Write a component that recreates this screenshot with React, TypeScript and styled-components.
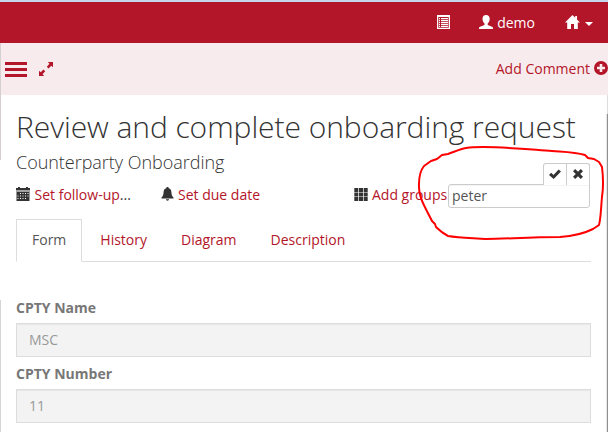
import React from "react";
import styled, { createGlobalStyle } from "styled-components";

const RED = "#b31529";
const INK = "#333333";
const LINE = "#dddddd";

const GlobalStyle = createGlobalStyle`
  * { box-sizing: border-box; }
  body {
    margin: 0;
    background: #fff;
    font-family: "Open Sans", "Noto Sans", sans-serif;
    font-size: 14px;
    line-height: 20px;
    color: ${INK};
    overflow: hidden;
  }
`;

const Page = styled.div`
  position: relative;
  width: 608px;
  height: 432px;
  overflow: hidden;
  display: flex;
  flex-direction: column;
`;

const Header = styled.header`
  flex: none;
  height: 43px;
  padding: 0 15px 0 0;
  border-top: 2px solid #c5d7ea;
  background: ${RED};
  color: #fff;
  display: flex;
  justify-content: flex-end;
  align-items: center;
`;

const HeaderItem = styled.span<{ $gap?: number; $before?: number }>`
  display: flex;
  align-items: center;
  gap: ${(p) => p.$gap ?? 4}px;
  margin-left: ${(p) => p.$before ?? 0}px;
  svg { margin-top: -1px; }
  svg + svg { margin-top: 2px; }
`;

const Toolbar = styled.div`
  flex: none;
  height: 52px;
  padding-left: 5px;
  background: #f8ebed;
  color: ${RED};
  display: flex;
  align-items: center;
`;

const Burger = styled.div`
  width: 22px;
  height: 15px;
  border-top: 3px solid ${RED};
  border-bottom: 3px solid ${RED};
  padding: 3px 0;
  &::before {
    content: "";
    display: block;
    height: 3px;
    background: ${RED};
  }
`;

const Expand = styled.span`
  display: flex;
  margin-left: 12px;
`;

const AddComment = styled.a`
  display: flex;
  align-items: center;
  gap: 4px;
  margin-left: auto;
  svg { margin-top: -2px; }
`;

const Content = styled.main`
  flex: 1;
  padding: 0 17px 0 16px;
`;

const Title = styled.h1`
  margin: 15px 0 0;
  font-size: 30px;
  font-weight: 300;
  line-height: 33px;
  letter-spacing: -0.06px;
  white-space: nowrap;
`;

const Subtitle = styled.h2`
  margin: 9px 0 0;
  font-size: 18px;
  font-weight: 300;
  line-height: 20px;
  letter-spacing: -0.03px;
`;

const Actions = styled.div`
  display: grid;
  grid-template-columns: 145px 193px 94px 142px;
  height: 34px;
  margin-top: 13px;
`;

const Action = styled.a<{ $gap?: number }>`
  display: flex;
  align-items: center;
  height: 20px;
  gap: ${(p) => p.$gap ?? 4}px;
  white-space: nowrap;
  svg { color: ${INK}; flex: none; margin-top: -2px; }
  span { color: ${RED}; }
`;

const Ellipsis = styled.b`
  font-weight: 400;
  color: ${INK};
`;

const Editor = styled.div`
  position: relative;
  height: 24px;
  margin-top: -1px;
`;

const GroupInput = styled.div`
  height: 24px;
  padding: 1px 3px;
  border: 1px solid #ccc;
  border-radius: 3px;
  border-top-right-radius: 0;
  background: #fff;
  box-shadow: inset 0 1px 1px rgba(0, 0, 0, 0.05);
  color: #555;
`;

const EditorButtons = styled.div`
  position: absolute;
  right: 0;
  bottom: 23px;
  display: flex;
  height: 22px;
  border: 1px solid #ccc;
  border-bottom: 0;
  border-radius: 3px 3px 0 0;
  background: #fff;
`;

const EditorButton = styled.button`
  width: 22px;
  padding: 0 0 1px;
  border: 0;
  background: none;
  color: ${INK};
  display: flex;
  align-items: center;
  justify-content: center;
  & + & { width: 23px; padding-bottom: 2px; border-left: 1px solid #ccc; }
`;

const Tabs = styled.nav`
  display: flex;
  height: 43px;
  border-bottom: 1px solid ${LINE};
`;

const Tab = styled.a<{ $active?: boolean }>`
  height: 43px;
  padding: 10px 15px;
  margin-right: 2px;
  border: 1px solid ${(p) => (p.$active ? LINE : "transparent")};
  border-bottom-color: ${(p) => (p.$active ? "#fff" : "transparent")};
  color: ${(p) => (p.$active ? "#555" : RED)};
`;

const Form = styled.form`
  padding-top: 36px;
`;

const Field = styled.div`
  height: 66px;
`;

const Label = styled.label`
  display: block;
  height: 20px;
  margin-bottom: 5px;
  font-weight: 700;
  color: #777;
`;

const Value = styled.div`
  height: 34px;
  padding: 6px 12px;
  border: 1px solid ${LINE};
  background: #f3f3f3;
  box-shadow: inset 0 1px 1px rgba(0, 0, 0, 0.05);
  color: #999;
`;

const Edge = styled.div<{ $x: number; $top: number; $height: number; $color: string }>`
  position: absolute;
  left: ${(p) => p.$x}px;
  top: ${(p) => p.$top}px;
  width: 1px;
  height: ${(p) => p.$height}px;
  background: ${(p) => p.$color};
`;

const Marker = styled.svg`
  position: absolute;
  left: 0;
  top: 0;
  pointer-events: none;
`;

const Icon = ({ w = 14, h = 14, children }: { w?: number; h?: number; children: React.ReactNode }) => (
  <svg width={w} height={h} viewBox={`0 0 ${w} ${h}`} fill="currentColor">
    {children}
  </svg>
);

const ListIcon = () => (
  <Icon w={13}>
    <path fillRule="evenodd" d="M0 0h13v14H0zM1.300 2v10.700h10.400V2z" />
    <path d="M2 3h1v1.300H2zM4 3h7v1.300H4zM2 5h1v1.300H2zM4 5h7v1.300H4zM2 7h1v1.300H2zM4 7h7v1.300H4zM2 9h1v1.300H2zM4 9h7v1.300H4zM2 11h1v1H2zM4 11h7v1H4z" />
  </Icon>
);

const UserIcon = () => (
  <Icon>
    <path d="M7 0C4.800 0 3.500 1.500 3.500 3.800c0 2 .7 3.700 2 4.700v1.500L1 11.800C.3 12.100 0 12.600 0 13.300V14h14v-.7c0-.7-.3-1.200-1-1.500L8.700 10V8.500c1.300-1 2-2.700 2-4.700C10.700 1.500 9.300 0 7 0z" />
  </Icon>
);

const HomeIcon = () => (
  <Icon w={15}>
    <path d="M7.500 0 0 7.500h2.200V14H6V9h3v5h3.800V7.500H15L12 4.500V1h-1.800v1.700z" />
  </Icon>
);

const CaretIcon = () => (
  <Icon w={8} h={4}>
    <path d="M0 0h8L4 4z" />
  </Icon>
);

const ExpandIcon = () => (
  <Icon w={14}>
    <path d="M8.800 0H14v5.300l-1.700-1.500-2.800 2.600-1.700-1.700 2.700-2.900zM0 14V8.700l1.700 1.500 2.800-2.600 1.700 1.700-2.700 2.900L5.200 14z" />
  </Icon>
);

const PlusIcon = () => (
  <Icon>
    <path fillRule="evenodd" d="M7 0a7 7 0 1 0 0 14A7 7 0 0 0 7 0zM5.700 3h2.600v2.700H11v2.600H8.300V11H5.700V8.300H3V5.700h2.700z" />
  </Icon>
);

const CalendarIcon = () => (
  <Icon>
    <path d="M2 0h2v1h6V0h2v1h2v2H0V1h2z" />
    <path opacity=".45" d="M0 3h14v2H0z" />
    <path fillRule="evenodd" d="M.5 5h13v9H.5zM4 6v1h1V6zm2.500 0v1h1V6zM9 6v1h1V6zm2.500 0v1h1V6zM1.500 8.500v1h1v-1zm2.500 0v1h1v-1zm2.500 0v1h1v-1zm2.500 0v1h1v-1zm2.500 0v1h1v-1zM1.500 11v1h1v-1zM4 11v1h1v-1zm2.500 0v1h1v-1zM9 11v1h1v-1z" />
  </Icon>
);

const BellIcon = () => (
  <Icon w={13} h={14}>
    <path d="M6.500 0c.8 0 1.200.5 1.200 1.300 1.800.5 2.600 1.900 2.700 3.700.1 2.800.6 4 2.100 5.500v1H.5v-1C2 9 2.500 7.800 2.600 5c.1-1.800.9-3.200 2.700-3.700C5.300.5 5.700 0 6.500 0zM5 12.300h3c0 1-.6 1.400-1.500 1.400S5 13.300 5 12.300z" />
  </Icon>
);

const GridIcon = () => (
  <Icon w={14} h={13}>
    <path d="M.3 0h4v4h-4zM5 0h4v4H5zM9.700 0h4v4h-4zM.3 4.500h4v4h-4zM5 4.500h4v4H5zM9.700 4.500h4v4h-4zM.3 9h4v4h-4zM5 9h4v4H5zM9.700 9h4v4h-4z" />
  </Icon>
);

const CheckIcon = () => (
  <Icon w={12} h={11}>
    <path d="M0 6l2.200-2.200 2.300 2.100L9.600.6 12 2.500 4.700 10z" />
  </Icon>
);

const CrossIcon = () => (
  <Icon w={10} h={10}>
    <path d="M2.200 0 5 2.800 7.800 0 10 2.200 7.200 5 10 7.800 7.800 10 5 7.200 2.200 10 0 7.800 2.800 5 0 2.200z" />
  </Icon>
);

export default function App() {
  return (
    <Page>
      <GlobalStyle />
      <Header>
        <HeaderItem><ListIcon /></HeaderItem>
        <HeaderItem $before={29}><UserIcon />demo</HeaderItem>
        <HeaderItem $before={30} $gap={5}><HomeIcon /><CaretIcon /></HeaderItem>
      </Header>
      <Toolbar>
        <Burger />
        <Expand><ExpandIcon /></Expand>
        <AddComment>Add Comment<PlusIcon /></AddComment>
      </Toolbar>
      <Content>
        <Title>Review and complete onboarding request</Title>
        <Subtitle>Counterparty Onboarding</Subtitle>
        <Actions>
          <Action $gap={4.5}><CalendarIcon /><span>Set follow-up<Ellipsis>...</Ellipsis></span></Action>
          <Action><BellIcon /><span>Set due date</span></Action>
          <Action><GridIcon /><span>Add groups</span></Action>
          <Editor>
            <GroupInput>peter</GroupInput>
            <EditorButtons>
              <EditorButton aria-label="Save"><CheckIcon /></EditorButton>
              <EditorButton aria-label="Cancel"><CrossIcon /></EditorButton>
            </EditorButtons>
          </Editor>
        </Actions>
        <Tabs>
          <Tab $active>Form</Tab>
          <Tab>History</Tab>
          <Tab>Diagram</Tab>
          <Tab>Description</Tab>
        </Tabs>
        <Form>
          <Field><Label>CPTY Name</Label><Value>MSC</Value></Field>
          <Field><Label>CPTY Number</Label><Value>11</Value></Field>
        </Form>
      </Content>
      <Edge $x={0} $top={43} $height={117} $color="#d5cfd0" />
      <Edge $x={0} $top={300} $height={132} $color="#d5d5d5" />
      <Edge $x={607} $top={95} $height={19} $color="#dddddd" />
      <Edge $x={606} $top={114} $height={318} $color="#e6e6e6" />
      <Edge $x={607} $top={114} $height={318} $color="#919191" />
      <Marker width="608" height="432" fill="none" stroke="#f00" strokeWidth="2" strokeLinecap="round" strokeLinejoin="round">
        <path d="M466 148C460 149 454 152 448 154L442 155L437 159L431 161L424 166C420 171 419 176 419 184C418 197 425 207 432 221L435 224L436 227C440 231 444 234 448 236C460 238 474 238 486 239C504 239 530 237 560 237C575 236 585 233 593 229L599 225C601 217 601 207 602 197C604 184 603 175 602 167L599 162L594 159L588 158L585 155C575 152 566 152 552 151C524 149 486 145 466 148" />
      </Marker>
    </Page>
  );
}
